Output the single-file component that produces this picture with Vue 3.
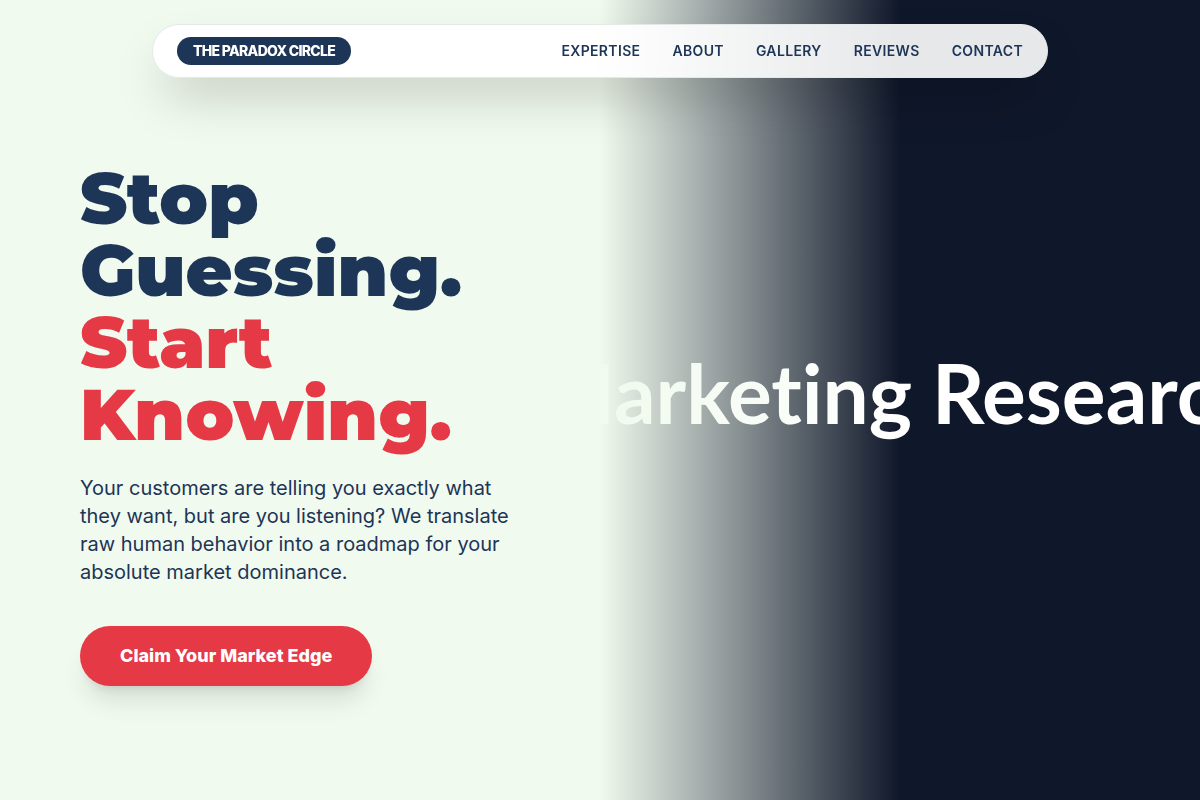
<script setup>
const links = ['Expertise', 'About', 'Gallery', 'Reviews', 'Contact']
</script>

<template>
  <header class="bar">
    <a class="brand" href="#top">THE PARADOX CIRCLE</a>
    <nav class="links" aria-label="Main">
      <a v-for="link in links" :key="link" :href="'#' + link.toLowerCase()">{{ link }}</a>
    </nav>
  </header>
  <main id="top" class="hero">
    <section class="pitch">
      <h1>Stop Guessing. <span class="accent">Start Knowing.</span></h1>
      <p>
        Your customers are telling you exactly what they want, but are you listening? We translate
        raw human behavior into a roadmap for your absolute market dominance.
      </p>
      <button type="button" class="cta">Claim Your Market Edge</button>
    </section>
    <div class="visual">
      <span class="caption">Marketing Research</span>
      <div class="fade"></div>
    </div>
  </main>
</template>

<style>
body {
  margin: 0;
  background: #f1faee;
}
</style>

<style scoped>
.bar {
  position: fixed;
  z-index: 10;
  top: 24px;
  left: 0;
  right: 0;
  margin: 0 auto;
  width: 90%;
  max-width: 896px;
  box-sizing: border-box;
  display: flex;
  align-items: center;
  justify-content: space-between;
  padding: 12px 24px;
  border: 1px solid #e5e7eb;
  border-radius: 32px;
  background: rgba(255, 255, 255, 0.9);
  backdrop-filter: blur(12px);
  box-shadow: 0 25px 50px -12px rgba(0, 0, 0, 0.25);
  font: 600 14px/20px Inter, sans-serif;
}

.brand {
  padding: 4px 16px;
  border-radius: 14px;
  background: #1d3557;
  color: #fff;
  font-weight: 800;
  letter-spacing: -0.05em;
  text-decoration: none;
}

.links {
  display: flex;
  gap: 32px;
}

.links a {
  color: #1d3557;
  text-decoration: none;
  text-transform: uppercase;
  letter-spacing: 0.025em;
}

.hero {
  display: grid;
  grid-template-columns: 1fr 1fr;
  min-height: 100vh;
  font-family: Inter, sans-serif;
  color: #1d3557;
}

.pitch {
  display: flex;
  flex-direction: column;
  align-items: flex-start;
  justify-content: center;
  padding: 48px 80px 0;
}

h1 {
  margin: 0 0 24px;
  font: 900 72px/72px Montserrat, Inter, sans-serif;
}

.accent {
  display: block;
  color: #e63946;
}

p {
  margin: 0 0 40px;
  max-width: 448px;
  font-size: 20px;
  line-height: 28px;
}

.cta {
  padding: 16px 40px;
  border: 0;
  border-radius: 30px;
  background: #e63946;
  color: #fff;
  font: 800 18px/28px Inter, sans-serif;
  box-shadow: 0 20px 25px -5px rgba(0, 0, 0, 0.1), 0 8px 10px -6px rgba(0, 0, 0, 0.1);
  cursor: pointer;
}

.visual {
  position: relative;
  display: flex;
  align-items: center;
  justify-content: center;
  overflow: hidden;
  padding-bottom: 16px;
  background: #0f172a;
}

.caption {
  flex: none;
  white-space: nowrap;
  color: #fff;
  font: 700 82px/96px Lato, sans-serif;
  font-variant-ligatures: none;
}

.fade {
  position: absolute;
  inset: 0 50% 0 0;
  background: linear-gradient(to right, #f1faee, transparent);
}
</style>
